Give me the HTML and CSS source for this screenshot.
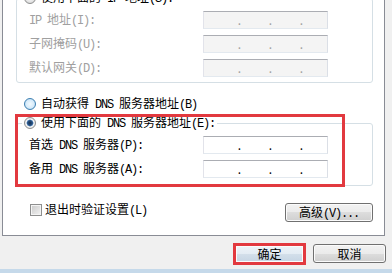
FILE: index.html
```html
<!DOCTYPE html>
<html>
<head>
    <meta charset="utf-8">
    <title>Internet 协议版本 4 (TCP/IPv4) 属性</title>
    <link rel="stylesheet" href="styles.css">
</head>
<body>
    <div class="page">
        <div class="group is-disabled">
            <div class="legend is-enabled">
                <span class="radio"></span>
                <span>使用下面的<span class="en"> IP </span>地址<span class="en">(S):</span></span>
            </div>
            <div class="field">
                <label><span class="en">IP </span>地址<span class="en">(I):</span></label>
                <div class="ipbox"><span>.</span><span>.</span><span>.</span></div>
            </div>
            <div class="field">
                <label>子网掩码<span class="en">(U):</span></label>
                <div class="ipbox"><span>.</span><span>.</span><span>.</span></div>
            </div>
            <div class="field">
                <label>默认网关<span class="en">(D):</span></label>
                <div class="ipbox"><span>.</span><span>.</span><span>.</span></div>
            </div>
        </div>

        <div class="option">
            <span class="radio is-hover"></span>
            <span>自动获得<span class="en"> DNS </span>服务器地址<span class="en">(B)</span></span>
        </div>

        <div class="group group-dns">
            <div class="legend">
                <span class="radio is-checked"></span>
                <span>使用下面的<span class="en"> DNS </span>服务器地址<span class="en">(E):</span></span>
            </div>
            <div class="field">
                <label>首选<span class="en"> DNS </span>服务器<span class="en">(P):</span></label>
                <div class="ipbox"><span>.</span><span>.</span><span>.</span></div>
            </div>
            <div class="field">
                <label>备用<span class="en"> DNS </span>服务器<span class="en">(A):</span></label>
                <div class="ipbox"><span>.</span><span>.</span><span>.</span></div>
            </div>
            <div class="mark"></div>
        </div>

        <div class="page-footer">
            <div class="check-row">
                <span class="checkbox"></span>
                <span>退出时验证设置<span class="en">(L)</span></span>
            </div>
            <button class="btn btn-advanced">高级<span class="en">(V)...</span></button>
        </div>
    </div>

    <div class="actions">
        <button class="btn btn-ok">确定</button>
        <button class="btn btn-cancel">取消</button>
    </div>
    <div class="frame-edge"></div>
</body>
</html>
```

FILE: styles.css
```css
body {
    margin: 0;
    height: 273px;
    overflow: hidden;
    background: #f0f0f0;
    font-family: "Noto Sans CJK SC", sans-serif;
    font-size: 12px;
    line-height: 14px;
    color: #000;
}

.en {
    font-family: "Liberation Mono", monospace;
    letter-spacing: -1.2px;
}

.page {
    display: flex;
    flex-direction: column;
    width: 381px;
    margin: -2px 0 0 2px;
    padding: 0 11px 13px 13px;
    box-sizing: border-box;
    width: 383px;
    background: #fff;
    border: 1px solid #898c95;
    border-top: none;
}

.group {
    position: relative;
    display: flex;
    flex-direction: column;
    padding-bottom: 5px;
    border: 1px solid #d5dfe5;
    border-radius: 3px;
}

.group-dns {
    margin-top: 12px;
    padding-bottom: 7px;
}

.legend,
.option,
.check-row {
    display: flex;
    align-items: center;
    gap: 5px;
    height: 14px;
}

.legend {
    align-self: flex-start;
    margin: -8px 0 0 5px;
    padding: 0 2px;
    background: #fff;
}

.option {
    margin: 14px 0 0 8px;
}

.field {
    display: grid;
    grid-template-columns: 174px 125px;
    align-items: center;
    height: 18px;
    margin-top: 6px;
    padding-left: 12px;
}

.is-disabled label {
    color: #a0a0a0;
}

.is-disabled .legend {
    color: #000;
}

.ipbox {
    display: flex;
    gap: 24px;
    height: 18px;
    padding-left: 32px;
    box-sizing: border-box;
    background: #fff;
    border: 1px solid;
    border-color: #abadb3 #dbdfe6 #e3e9ef #e2e3ea;
}

.ipbox span {
    width: 7px;
    text-align: center;
    line-height: 15px;
}

.is-disabled .ipbox {
    background: #f4f4f4;
}

.is-disabled .ipbox span {
    color: #a0a0a0;
}

.radio {
    width: 12px;
    height: 12px;
    box-sizing: border-box;
    border-radius: 50%;
    border: 1px solid #8e8f8f;
    background: radial-gradient(circle, #fbfbfb 0, #e4e4e4 4px, #cfcfcf 6px);
}

.radio.is-hover {
    border-color: #3c7fb1;
    background: radial-gradient(circle, #f3fafe 0, #d6ebfa 4px, #b6d6ee 6px);
}

.radio.is-checked {
    background: radial-gradient(circle, #15304f 0, #2a5587 2.5px, #6f9ccc 3.2px, #f6f6f6 3.8px, #dadada 6px);
}

.mark {
    position: absolute;
    left: -2px;
    top: -10px;
    width: 330px;
    height: 73px;
    box-sizing: border-box;
    border: 3px solid #e2393f;
    z-index: 1;
}

.page-footer {
    display: flex;
    justify-content: space-between;
    align-items: flex-start;
    margin-top: 17px;
}

.check-row {
    margin: 0 0 0 14px;
    gap: 3px;
}

.checkbox {
    width: 12px;
    height: 12px;
    box-sizing: border-box;
    border: 1px solid #8e8f8f;
    box-shadow: inset 0 0 0 1px #f4f4f4;
    background: linear-gradient(135deg, #c9c9c9, #f4f4f4);
}

.btn {
    height: 19px;
    padding: 0;
    box-sizing: border-box;
    font-family: inherit;
    font-size: 12px;
    line-height: 14px;
    color: #000;
    border: 1px solid #707070;
    border-radius: 3px;
    background: linear-gradient(#f2f2f2 0, #ebebeb 50%, #dddddd 50%, #cfcfcf 100%);
    box-shadow: inset 0 0 0 1px #fbfbfb;
}

.btn-advanced {
    width: 88px;
}

.actions {
    display: flex;
    justify-content: flex-end;
    align-items: flex-start;
    gap: 7px;
    height: 22px;
    padding: 7px 6px 0 0;
}

.btn-cancel {
    width: 73px;
    margin-top: 1px;
}

.btn-ok {
    width: 73px;
    height: 22px;
    border: 3px solid #e2393f;
    border-radius: 0;
    background: linear-gradient(#eef3f8 0, #e3ecf4 50%, #d3dfea 50%, #c6d5e4 100%);
}

.frame-edge {
    height: 6px;
    margin-top: 4px;
    background: #c5d9ea;
}
```
